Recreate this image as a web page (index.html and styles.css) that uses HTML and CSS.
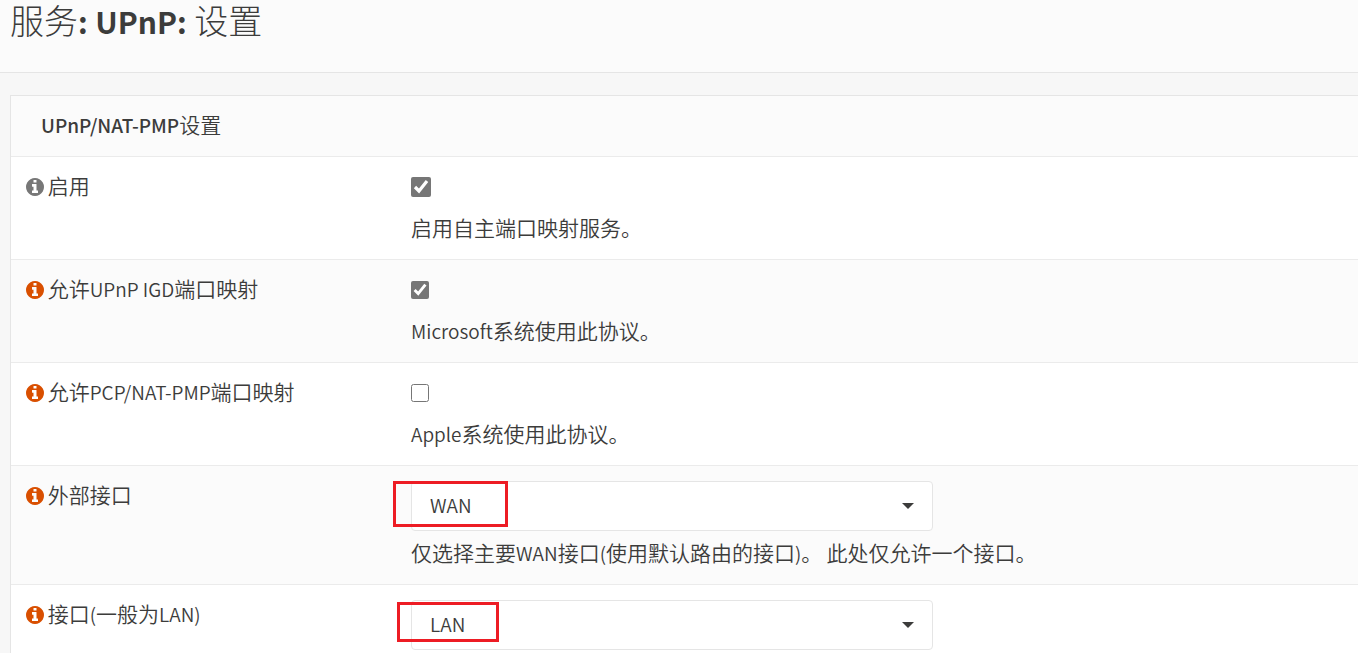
FILE: index.html
```html
<!DOCTYPE html>
<html lang="zh-CN">
  <head>
    <meta charset="UTF-8" />
    <meta name="viewport" content="width=device-width, initial-scale=1.0" />
    <title>服务: UPnP: 设置</title>
    <link rel="stylesheet" href="styles.css">
  </head>
  <body>
    <svg class="defs" width="0" height="0" aria-hidden="true">
      <symbol id="info" viewBox="0 0 1536 1536">
        <path d="M1024 1248v-160q0-14-9-23t-23-9h-96V544q0-14-9-23t-23-9H544q-14 0-23 9t-9 23v160q0 14 9 23t23 9h96v320h-96q-14 0-23 9t-9 23v160q0 14 9 23t23 9h448q14 0 23-9t9-23zM896 352V192q0-14-9-23t-23-9H672q-14 0-23 9t-9 23v160q0 14 9 23t23 9h192q14 0 23-9t9-23zm640 416q0 209-103 385.500T1153.500 1433 768 1536t-385.500-103T103 1153.500 0 768t103-385.500T382.500 103 768 0t385.500 103T1433 382.500 1536 768z"/>
      </symbol>
    </svg>
    <header class="page-head">
      <h1>服务<b>:</b> <b>UPnP:</b> 设置</h1>
    </header>
    <main class="page-content">
      <table class="settings">
        <colgroup>
          <col class="col-name">
          <col>
        </colgroup>
        <thead>
          <tr>
            <th colspan="2"><span class="latin">UPnP/NAT-PMP</span>设置</th>
          </tr>
        </thead>
        <tbody>
          <tr>
            <td class="name">
              <svg class="icon muted"><use href="#info"/></svg>
              <label for="enable">启用</label>
            </td>
            <td>
              <div class="check"><input type="checkbox" id="enable" class="large" checked></div>
              <p class="help">启用自主端口映射服务。</p>
            </td>
          </tr>
          <tr>
            <td class="name">
              <svg class="icon"><use href="#info"/></svg>
              <label for="igd">允许<span class="latin">UPnP IGD</span>端口映射</label>
            </td>
            <td>
              <div class="check"><input type="checkbox" id="igd" checked></div>
              <p class="help"><span class="latin">Microsoft</span>系统使用此协议。</p>
            </td>
          </tr>
          <tr>
            <td class="name">
              <svg class="icon"><use href="#info"/></svg>
              <label for="pcp">允许<span class="latin">PCP/NAT-PMP</span>端口映射</label>
            </td>
            <td>
              <div class="check"><input type="checkbox" id="pcp"></div>
              <p class="help"><span class="latin">Apple</span>系统使用此协议。</p>
            </td>
          </tr>
          <tr>
            <td class="name">
              <svg class="icon"><use href="#info"/></svg>
              <label for="ext">外部接口</label>
            </td>
            <td>
              <div class="picker">
                <select id="ext">
                  <option>WAN</option>
                </select>
                <span class="caret"></span>
                <span class="mark mark-wan"></span>
              </div>
              <p class="help">仅选择主要<span class="latin">WAN</span>接口<span class="latin">(</span>使用默认路由的接口<span class="latin">)</span>。<span class="latin"> </span>此处仅允许一个接口。</p>
            </td>
          </tr>
          <tr>
            <td class="name">
              <svg class="icon"><use href="#info"/></svg>
              <label for="iface">接口<span class="latin">(</span>一般为<span class="latin">LAN)</span></label>
            </td>
            <td>
              <div class="picker">
                <select id="iface">
                  <option>LAN</option>
                </select>
                <span class="caret"></span>
                <span class="mark mark-lan"></span>
              </div>
            </td>
          </tr>
        </tbody>
      </table>
    </main>
  </body>
</html>
```

FILE: styles.css
```css
* {
  margin: 0;
  padding: 0;
  box-sizing: border-box;
}
body {
  height: 100vh;
  overflow: hidden;
  background: #f7f7f7;
  color: #3c3c3b;
  font-family: "Noto Sans CJK SC", "Noto Sans", sans-serif;
  font-size: 21px;
  font-weight: 350;
  line-height: 30px;
}
.defs {
  position: absolute;
}
.page-head {
  padding: 0 10px 32px;
  background: #fbfbfb;
  border-bottom: 1px solid #e5e5e5;
}
.page-head h1 {
  font-size: 34px;
  font-weight: 300;
  line-height: 40px;
}
.page-head b {
  font-size: 30px;
  font-weight: 700;
  line-height: 1;
}
.page-content {
  padding: 22px 0 0 10px;
}
.latin {
  font-size: 19px;
  line-height: 1;
}

/* settings table */
.settings {
  width: 100%;
  border-spacing: 0;
  table-layout: fixed;
  background: #fff;
  border-top: 1px solid #e5e5e5;
  border-left: 1px solid #e5e5e5;
}
.col-name {
  width: 385px;
}
.settings th {
  padding: 13px 30px 17px;
  background: #fbfbfb;
  text-align: left;
  font-weight: 350;
}
.settings th .latin {
  font-weight: 500;
}
.settings td {
  padding: 15px 15px 17px;
  border-top: 1px solid #ebebeb;
  vertical-align: top;
}
.settings tbody tr:nth-child(even) {
  background: #fbfbfb;
}
.settings td.name {
  padding-top: 13px;
  white-space: nowrap;
}
.icon {
  width: 18px;
  height: 18px;
  fill: #d94f00;
  vertical-align: -2px;
}
.icon.muted {
  fill: #777;
}
.name label {
  margin-left: -1px;
}
.check {
  display: flex;
  align-items: center;
  height: 30px;
}
.check input {
  width: 18px;
  height: 18px;
  accent-color: #767676;
}
.check .large {
  width: 20px;
  height: 20px;
}
.help {
  margin-top: 10px;
}

/* drop-downs */
.picker {
  position: relative;
  max-width: 522px;
}
.picker + .help {
  margin-top: 6px;
}
.picker select {
  display: block;
  width: 100%;
  height: 50px;
  padding: 0 18px 4px;
  appearance: none;
  background: #fff;
  border: 1px solid #e5e5e5;
  border-radius: 4px;
  color: inherit;
  font-family: inherit;
  font-size: 19px;
  font-weight: 350;
}
.caret {
  position: absolute;
  top: 22px;
  right: 19px;
  border: 6px solid transparent;
  border-top-color: #3c3c3b;
  border-bottom: 0;
}
.mark {
  position: absolute;
  border: 3px solid #ed1c24;
  pointer-events: none;
}
.mark-wan {
  top: 0;
  left: -18px;
  width: 115px;
  height: 46px;
}
.mark-lan {
  top: 2px;
  left: -14px;
  width: 102px;
  height: 40px;
}
```
